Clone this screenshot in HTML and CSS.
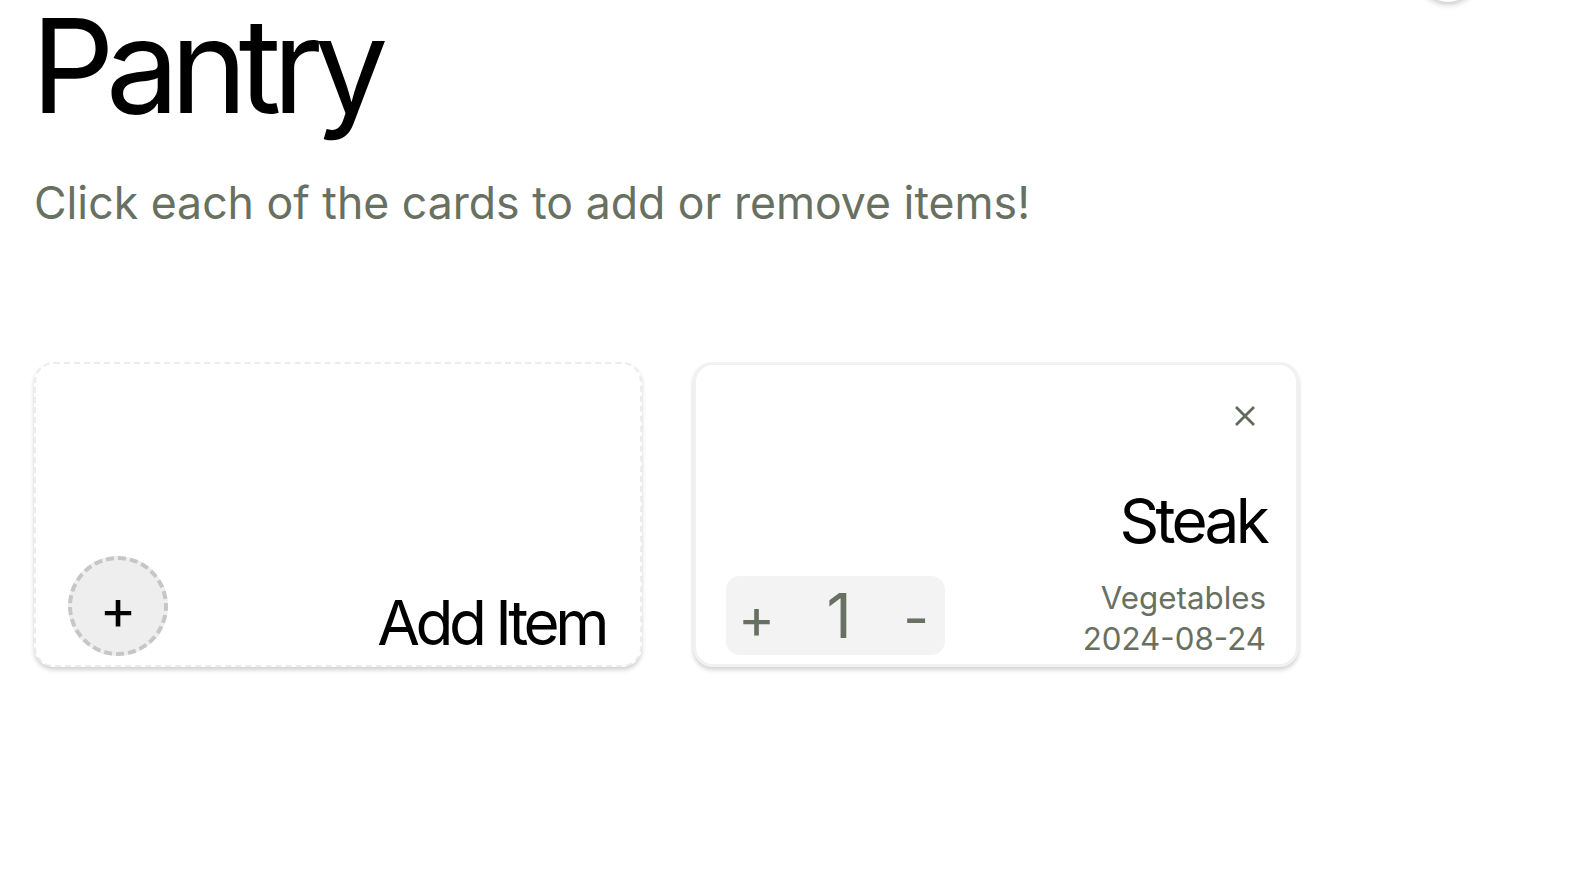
FILE: index.html
```html
<!DOCTYPE html>
<html lang="en">
<head>
<meta charset="utf-8">
<title>Pantry</title>
<link rel="stylesheet" href="styles.css">
</head>
<body>
<div class="fab" aria-hidden="true"></div>
<main class="page">
  <h1 class="title">Pantry</h1>
  <p class="subtitle">Click each of the cards to add or remove items!</p>
  <section class="cards">
    <div class="card card-add">
      <div class="add-circle">+</div>
      <div class="add-label">Add Item</div>
    </div>
    <div class="card card-item">
      <div class="card-top">
        <svg class="close" width="22" height="22" viewBox="0 0 22 22"><path d="M2 2 L20 20 M20 2 L2 20" stroke="#5f6a5b" stroke-width="2.8" fill="none"/></svg>
      </div>
      <div class="item-name">Steak</div>
      <div class="card-bottom">
        <div class="counter">
          <span class="ctr-btn">+</span>
          <span class="ctr-val">1</span>
          <span class="ctr-btn">-</span>
        </div>
        <div class="meta">
          <div>Vegetables</div>
          <div>2024-08-24</div>
        </div>
      </div>
    </div>
  </section>
</main>
</body>
</html>
```
FILE: styles.css
```css
* { box-sizing: border-box; }
html, body { margin: 0; padding: 0; background: #fff; }
body { font-family: Inter, "Liberation Sans", sans-serif; color: #000; position: relative; min-height: 876px; }

.fab {
  position: absolute;
  top: -58px;
  left: 1418px;
  width: 60px;
  height: 60px;
  border-radius: 50%;
  background: #fff;
  box-shadow: 0 2px 6px rgba(0,0,0,0.25);
}

.page { padding: 0 34px; }

.title {
  margin: 0 0 0 -3px;
  font-size: 131px;
  font-weight: 400;
  line-height: 1;
  letter-spacing: -9px;
}

.subtitle {
  margin: 45px 0 0;
  font-size: 44.6px;
  line-height: 54px;
  color: #687062;
}

.cards {
  display: flex;
  gap: 51px;
  margin-top: 132px;
}

.card {
  width: 608px;
  height: 305px;
  border-radius: 20px;
  background: #fff;
  box-shadow: 0 3px 4px rgba(0,0,0,0.18);
}

.card-add {
  border: 2px dashed #ececec;
  display: flex;
  align-items: flex-end;
  justify-content: space-between;
  padding: 0 35px 9px 32px;
}

.add-circle {
  width: 100px;
  height: 100px;
  border-radius: 50%;
  border: 4px dashed #c6c6c6;
  background: #eeeeee;
  display: flex;
  align-items: center;
  justify-content: center;
  font-size: 56px;
  line-height: 1;
  padding-top: 6px;
  color: #000;
}

.add-label {
  font-size: 62px;
  line-height: 1;
  letter-spacing: -4.5px;
  padding-bottom: 2px;
}

.card-item {
  width: 606px;
  border: 3px solid #f1f1f1;
  display: flex;
  flex-direction: column;
  padding: 40px 30px 9px 30px;
}

.card-top { display: flex; justify-content: flex-end; padding-right: 10px; }
.close { display: block; }

.item-name {
  margin-top: 63px;
  text-align: right;
  font-size: 62px;
  line-height: 1;
  letter-spacing: -3.7px;
}

.card-bottom {
  margin-top: auto;
  display: flex;
  justify-content: space-between;
  align-items: flex-end;
}

.counter {
  width: 219px;
  height: 79px;
  border-radius: 14px;
  background: #f3f3f3;
  display: flex;
  align-items: center;
  justify-content: space-between;
  padding: 0 16px 0 12px;
  color: #687062;
}
.ctr-btn { font-size: 56px; line-height: 1; padding-top: 4px; }
.ctr-val { font-size: 62px; line-height: 1; }

.meta {
  text-align: right;
  font-size: 31.3px;
  line-height: 41px;
  color: #687062;
  margin-bottom: -5px;
}
```
